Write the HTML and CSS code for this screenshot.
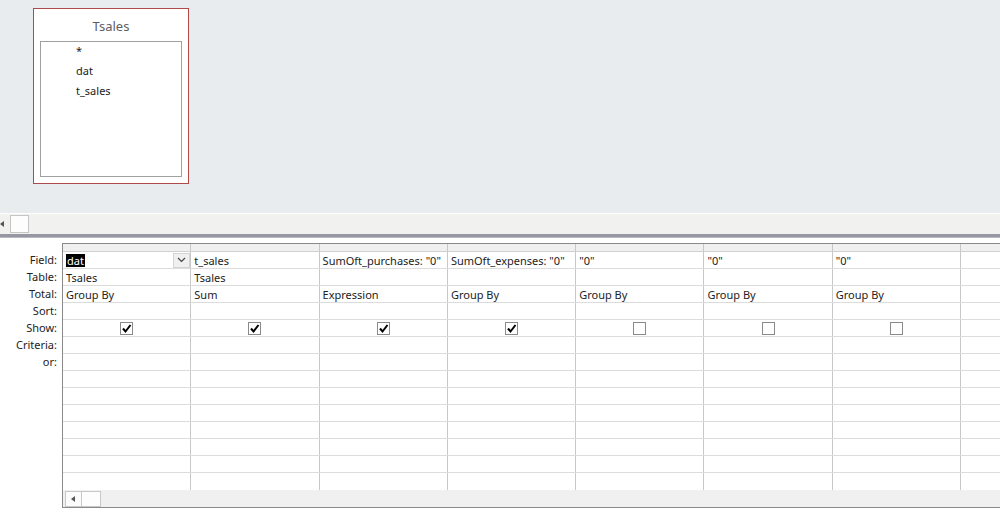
FILE: index.html
```html
<!DOCTYPE html>
<html>
<head>
<meta charset="utf-8">
<link rel="stylesheet" href="styles.css">
</head>
<body>
<div class="app">
  <div class="design">
    <div class="tbl">
      <div class="tbl-title">Tsales</div>
      <div class="tbl-list">
        <div class="fld">*</div>
        <div class="fld">dat</div>
        <div class="fld">t_sales</div>
      </div>
    </div>
  </div>
  <div class="hbar">
    <span class="hbar-arrow"></span>
    <span class="hbar-thumb"></span>
  </div>
  <div class="splitter"></div>
  <div class="qbe">
    <div class="labels">
      <div class="lbl">Field:</div>
      <div class="lbl">Table:</div>
      <div class="lbl">Total:</div>
      <div class="lbl">Sort:</div>
      <div class="lbl">Show:</div>
      <div class="lbl">Criteria:</div>
      <div class="lbl">or:</div>
    </div>
    <div class="grid">
      <div class="row head">
        <div class="c"></div><div class="c"></div><div class="c"></div><div class="c"></div><div class="c"></div><div class="c"></div><div class="c"></div><div class="c"></div>
      </div>
      <div class="row">
        <div class="c dd"><span class="sel">dat</span><span class="ddbtn"><svg width="9" height="6" viewBox="0 0 9 6"><path d="M1 1 L4.5 4.5 L8 1" fill="none" stroke="#444" stroke-width="1.2"/></svg></span></div>
        <div class="c">t_sales</div>
        <div class="c">SumOft_purchases: "0"</div>
        <div class="c">SumOft_expenses: "0"</div>
        <div class="c">"0"</div>
        <div class="c">"0"</div>
        <div class="c">"0"</div>
        <div class="c"></div>
      </div>
      <div class="row">
        <div class="c">Tsales</div><div class="c">Tsales</div><div class="c"></div><div class="c"></div><div class="c"></div><div class="c"></div><div class="c"></div><div class="c"></div>
      </div>
      <div class="row">
        <div class="c">Group By</div><div class="c">Sum</div><div class="c">Expression</div><div class="c">Group By</div><div class="c">Group By</div><div class="c">Group By</div><div class="c">Group By</div><div class="c"></div>
      </div>
      <div class="row">
        <div class="c"></div><div class="c"></div><div class="c"></div><div class="c"></div><div class="c"></div><div class="c"></div><div class="c"></div><div class="c"></div>
      </div>
      <div class="row">
        <div class="c chk"><span class="box"><svg width="11" height="11" viewBox="0 0 11 11"><path d="M2 5.5 L4.5 8.5 L9.5 2" fill="none" stroke="#000" stroke-width="2"/></svg></span></div>
        <div class="c chk"><span class="box"><svg width="11" height="11" viewBox="0 0 11 11"><path d="M2 5.5 L4.5 8.5 L9.5 2" fill="none" stroke="#000" stroke-width="2"/></svg></span></div>
        <div class="c chk"><span class="box"><svg width="11" height="11" viewBox="0 0 11 11"><path d="M2 5.5 L4.5 8.5 L9.5 2" fill="none" stroke="#000" stroke-width="2"/></svg></span></div>
        <div class="c chk"><span class="box"><svg width="11" height="11" viewBox="0 0 11 11"><path d="M2 5.5 L4.5 8.5 L9.5 2" fill="none" stroke="#000" stroke-width="2"/></svg></span></div>
        <div class="c chk"><span class="box"></span></div>
        <div class="c chk"><span class="box"></span></div>
        <div class="c chk"><span class="box"></span></div>
        <div class="c"></div>
      </div>
      <div class="row"><div class="c"></div><div class="c"></div><div class="c"></div><div class="c"></div><div class="c"></div><div class="c"></div><div class="c"></div><div class="c"></div></div>
      <div class="row"><div class="c"></div><div class="c"></div><div class="c"></div><div class="c"></div><div class="c"></div><div class="c"></div><div class="c"></div><div class="c"></div></div>
      <div class="row"><div class="c"></div><div class="c"></div><div class="c"></div><div class="c"></div><div class="c"></div><div class="c"></div><div class="c"></div><div class="c"></div></div>
      <div class="row"><div class="c"></div><div class="c"></div><div class="c"></div><div class="c"></div><div class="c"></div><div class="c"></div><div class="c"></div><div class="c"></div></div>
      <div class="row"><div class="c"></div><div class="c"></div><div class="c"></div><div class="c"></div><div class="c"></div><div class="c"></div><div class="c"></div><div class="c"></div></div>
      <div class="row"><div class="c"></div><div class="c"></div><div class="c"></div><div class="c"></div><div class="c"></div><div class="c"></div><div class="c"></div><div class="c"></div></div>
      <div class="row"><div class="c"></div><div class="c"></div><div class="c"></div><div class="c"></div><div class="c"></div><div class="c"></div><div class="c"></div><div class="c"></div></div>
      <div class="row"><div class="c"></div><div class="c"></div><div class="c"></div><div class="c"></div><div class="c"></div><div class="c"></div><div class="c"></div><div class="c"></div></div>
      <div class="row last"><div class="c"></div><div class="c"></div><div class="c"></div><div class="c"></div><div class="c"></div><div class="c"></div><div class="c"></div><div class="c"></div></div>
      <div class="gscroll">
        <span class="g-arrow"></span>
        <span class="g-thumb"></span>
      </div>
    </div>
  </div>
</div>
</body>
</html>
```

FILE: styles.css
```css
* { box-sizing: border-box; }
html, body {
  margin: 0;
  padding: 0;
  width: 1000px;
  height: 522px;
  overflow: hidden;
  background: #ffffff;
  font-family: "Noto Sans", "Open Sans", "DejaVu Sans", sans-serif;
  font-size: 11px;
  color: #222;
}
.app {
  width: 1000px;
  height: 522px;
  display: flex;
  flex-direction: column;
}
.design {
  height: 213px;
  background: #e9ecef;
  padding: 8px 0 0 33px;
  flex: none;
}
.tbl {
  width: 156px;
  height: 176px;
  background: #ffffff;
  border: 1px solid #b04a4a;
  padding: 0 6px 0 6px;
  display: flex;
  flex-direction: column;
}
.tbl-title {
  height: 32px;
  text-align: center;
  font-size: 13px;
  color: #606060;
  line-height: 34px;
}
.tbl-list {
  height: 136px;
  border: 1px solid #a0a0a0;
  padding: 1px 0 0 35px;
}
.fld {
  height: 20px;
  line-height: 16px;
  font-size: 11px;
  color: #222;
}
.hbar {
  height: 21px;
  background: #f1f1f0;
  border-top: 1px solid #ffffff;
  display: flex;
  align-items: center;
  flex: none;
  position: relative;
}
.hbar-arrow {
  width: 0;
  height: 0;
  border-top: 3px solid transparent;
  border-bottom: 3px solid transparent;
  border-right: 4px solid #555;
  margin-left: 0;
}
.hbar-thumb {
  width: 19px;
  height: 18px;
  margin-left: 6px;
  background: #fdfdfd;
  border: 1px solid #c6c6c6;
}
.splitter {
  height: 4px;
  background: #9697a3;
  border-bottom: 1px solid #b8b8c0;
  flex: none;
}
.qbe {
  flex: 1;
  display: flex;
  padding-top: 5px;
  overflow: hidden;
}
.labels {
  width: 62px;
  flex: none;
  padding-top: 9px;
  padding-right: 5px;
}
.lbl {
  height: 17px;
  line-height: 15px;
  text-align: right;
  font-size: 11px;
  color: #222;
}
.grid {
  width: 1040px;
  flex: none;
  border: 1px solid #8a8a8a;
  border-right: none;
  align-self: flex-start;
}
.row {
  display: flex;
  height: 17px;
  border-bottom: 1px solid #dcdcdc;
}
.row.head {
  height: 8px;
  background: #f0f0f0;
  border-bottom: 1px solid #d0d0d0;
}
.row.last {
  border-bottom: none;
}
.c {
  width: 128.3px;
  flex: none;
  border-right: 1px solid #c8c8c8;
  padding-left: 3px;
  line-height: 15px;
  white-space: nowrap;
  overflow: hidden;
  display: flex;
  align-items: center;
}
.c.dd {
  padding-left: 3px;
  justify-content: space-between;
  padding-right: 0;
}
.sel {
  background: #000;
  color: #fff;
  line-height: 13px;
  padding: 0 1px;
}
.ddbtn {
  width: 17px;
  height: 15px;
  background: #f0f0f0;
  border: 1px solid #d4d4d4;
  display: flex;
  align-items: center;
  justify-content: center;
}
.c.chk {
  justify-content: center;
  padding-left: 0;
}
.box {
  width: 13px;
  height: 13px;
  border: 1px solid #8a8a8a;
  background: #fff;
  display: flex;
  align-items: center;
  justify-content: center;
}
.gscroll {
  height: 17px;
  background: #f0f0f0;
  display: flex;
  align-items: center;
  padding-left: 2px;
}
.g-arrow {
  width: 17px;
  height: 16px;
  border: 1px solid #c8c8c8;
  background: #fbfbfb;
  position: relative;
}
.g-arrow::after {
  content: "";
  position: absolute;
  left: 5px;
  top: 4px;
  border-top: 3px solid transparent;
  border-bottom: 3px solid transparent;
  border-right: 4px solid #555;
}
.g-thumb {
  width: 19px;
  height: 16px;
  border: 1px solid #c8c8c8;
  border-left: none;
  background: #fdfdfd;
}
```
